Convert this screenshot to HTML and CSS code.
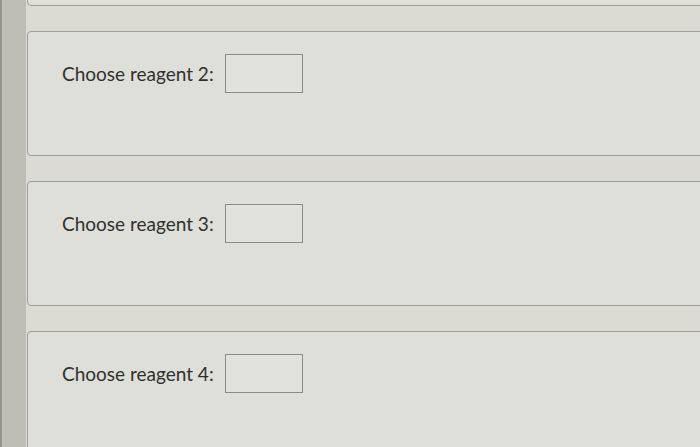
FILE: index.html
```html
<!DOCTYPE html>
<html lang="en">
  <head>
    <meta charset="UTF-8" />
    <title>Reagents</title>
    <link rel="stylesheet" href="styles.css">
  </head>
  <body>
    <div class="rail"></div>
    <main>
      <div class="question prev"></div>

      <div class="question">
        <label for="reagent-2">Choose reagent 2:</label>
        <input type="text" id="reagent-2" />
      </div>

      <div class="question">
        <label for="reagent-3">Choose reagent 3:</label>
        <input type="text" id="reagent-3" />
      </div>

      <div class="question">
        <label for="reagent-4">Choose reagent 4:</label>
        <input type="text" id="reagent-4" />
      </div>
    </main>
  </body>
</html>
```

FILE: styles.css
```css
body {
  margin: 0;
  height: 100vh;
  overflow: hidden;
  display: flex;
  background-color: rgb(219, 219, 212);
  font-family: Lato, "Open Sans", sans-serif;
}

.rail {
  flex: 0 0 26px;
  background-color: rgb(190, 190, 180);
  border-left: 2px solid rgb(150, 150, 140);
  box-sizing: border-box;
}

main {
  flex: 1;
  padding-left: 1px;
  margin-top: -119px;
  margin-right: -12px;
  display: flex;
  flex-direction: column;
  gap: 25px;
}

.question {
  flex: 0 0 auto;
  height: 125px;
  box-sizing: border-box;
  padding: 22px 0 0 34px;
  display: flex;
  align-items: flex-start;
  gap: 11px;
  background-color: rgb(223, 223, 217);
  border: 1.5px solid rgb(158, 158, 152);
  border-radius: 4px;
}

.question label {
  font-size: 19px;
  line-height: 39px;
  color: rgb(48, 48, 46);
}

.question input {
  width: 78px;
  height: 39px;
  box-sizing: border-box;
  margin: 0;
  border: 1px solid rgb(140, 140, 134);
  border-radius: 0;
  background-color: rgb(226, 226, 220);
}
```
